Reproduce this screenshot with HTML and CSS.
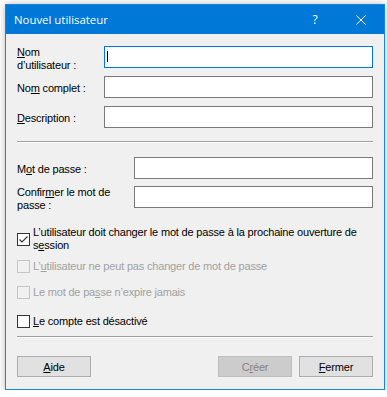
FILE: index.html
```html
<!DOCTYPE html>
<html lang="fr">
<head>
<meta charset="utf-8">
<title>Nouvel utilisateur</title>
<link rel="stylesheet" href="styles.css">
</head>
<body>
<div class="window">
  <div class="titlebar">
    <span class="title">Nouvel utilisateur</span>
    <span class="cap-btn help">?</span>
    <span class="cap-btn close">
      <svg width="10" height="10" viewBox="0 0 10 10"><path d="M0.5 0.5 L9.5 9.5 M9.5 0.5 L0.5 9.5" stroke="#fff" stroke-width="1" fill="none"/></svg>
    </span>
  </div>
  <div class="content">
    <div class="grid grid-top">
      <div class="label"><u>N</u>om<br>d’utilisateur :</div>
      <div class="field focus"><span class="caret"></span></div>
      <div class="label">No<u>m</u> complet :</div>
      <div class="field"></div>
      <div class="label"><u>D</u>escription :</div>
      <div class="field"></div>
    </div>
    <div class="sep sep-top"></div>
    <div class="grid grid-pw">
      <div class="label">M<u>o</u>t de passe :</div>
      <div class="field"></div>
      <div class="label">Confir<u>m</u>er le mot de<br>passe :</div>
      <div class="field"></div>
    </div>
    <div class="check r1">
      <span class="box checked"><svg width="11" height="11" viewBox="0 0 11 11"><path d="M1.5 5.5 L4 8 L9.5 2.5" stroke="#333" stroke-width="1.1" fill="none"/></svg></span>
      <span class="ctext">L’utilisateur doit changer le mot de passe à la prochaine ouverture de<br>s<u>e</u>ssion</span>
    </div>
    <div class="check r2 disabled">
      <span class="box"></span>
      <span class="ctext">L’<u>u</u>tilisateur ne peut pas changer de mot de passe</span>
    </div>
    <div class="check r3 disabled">
      <span class="box"></span>
      <span class="ctext">Le mot de pa<u>s</u>se n’expire jamais</span>
    </div>
    <div class="check r4">
      <span class="box"></span>
      <span class="ctext"><u>L</u>e compte est désactivé</span>
    </div>
    <div class="sep sep-bottom"></div>
    <div class="buttons">
      <button class="btn"><u>A</u>ide</button>
      <span class="spacer"></span>
      <button class="btn" disabled>C<u>r</u>éer</button>
      <button class="btn"><u>F</u>ermer</button>
    </div>
  </div>
</div>
</body>
</html>
```

FILE: styles.css
```css
body {
  margin: 0;
  background: #ffffff;
  font-family: "Liberation Sans", Arial, sans-serif;
  font-size: 11px;
  letter-spacing: -0.18px;
  color: #000;
}

.window {
  margin: 4px 0 0 5px;
  width: 380px;
  height: 386px;
  box-sizing: border-box;
  border: 1px solid #1883d7;
  background: #f0f0f0;
  box-shadow: 0 0 7px rgba(0, 0, 0, 0.28);
  display: flex;
  flex-direction: column;
}

.titlebar {
  height: 29px;
  flex: none;
  background: #0078d7;
  color: #fff;
  display: flex;
  align-items: center;
  font-family: "Open Sans", "Noto Sans", sans-serif;
  font-size: 11.4px;
  letter-spacing: 0;
}

.title {
  flex: 1;
  padding-left: 8px;
}

.cap-btn {
  width: 46px;
  height: 29px;
  display: flex;
  align-items: center;
  justify-content: center;
}

.help {
  font-size: 12px;
}

.content {
  padding: 12px 11px 0 11px;
  display: flex;
  flex-direction: column;
}

.grid {
  display: grid;
  grid-auto-rows: 22px;
}

.grid-top {
  grid-template-columns: 87px 1fr;
  row-gap: 8px;
}

.grid-pw {
  grid-template-columns: 117px 1fr;
  row-gap: 7px;
  margin-top: 14px;
}

.label {
  align-self: center;
  line-height: 13px;
  padding-top: 3px;
  white-space: nowrap;
}

.field {
  height: 22px;
  box-sizing: border-box;
  border: 1px solid #7a7a7a;
  background: #fff;
}

.field.focus {
  border-color: #0078d7;
}

.caret {
  display: block;
  width: 1px;
  height: 11px;
  background: #000;
  margin: 4px 0 0 2px;
}

.sep {
  border-top: 1px solid #a0a0a0;
  border-bottom: 1px solid #ffffff;
}

.sep-top {
  margin-top: 13px;
}

.sep-bottom {
  margin-top: 8px;
}

.check {
  display: flex;
  align-items: center;
  line-height: 13px;
}

.check.r1 { margin-top: 18px; }
.check.r2 { margin-top: 8px; }
.check.r3 { margin-top: 13px; }
.check.r4 { margin-top: 16px; }

.box {
  width: 13px;
  height: 13px;
  box-sizing: border-box;
  border: 1px solid #333;
  background: #fff;
  margin-right: 3px;
  flex: none;
  display: flex;
  align-items: center;
  justify-content: center;
}

.ctext {
  white-space: nowrap;
}

.check.disabled .box {
  border-color: #c6c6c6;
  background: #f0f0f0;
}

.check.disabled .ctext {
  color: #a0a0a0;
}

.buttons {
  display: flex;
  gap: 7px;
  margin-top: 18px;
}

.spacer {
  flex: 1;
}

.btn {
  width: 74px;
  height: 21px;
  box-sizing: border-box;
  padding: 0;
  border: 1px solid #adadad;
  background: #e1e1e1;
  color: #000;
  font-family: "Liberation Sans", Arial, sans-serif;
  font-size: 11px;
  letter-spacing: -0.18px;
}

.btn:disabled {
  background: #cccccc;
  border-color: #bfbfbf;
  color: #838383;
}
```
